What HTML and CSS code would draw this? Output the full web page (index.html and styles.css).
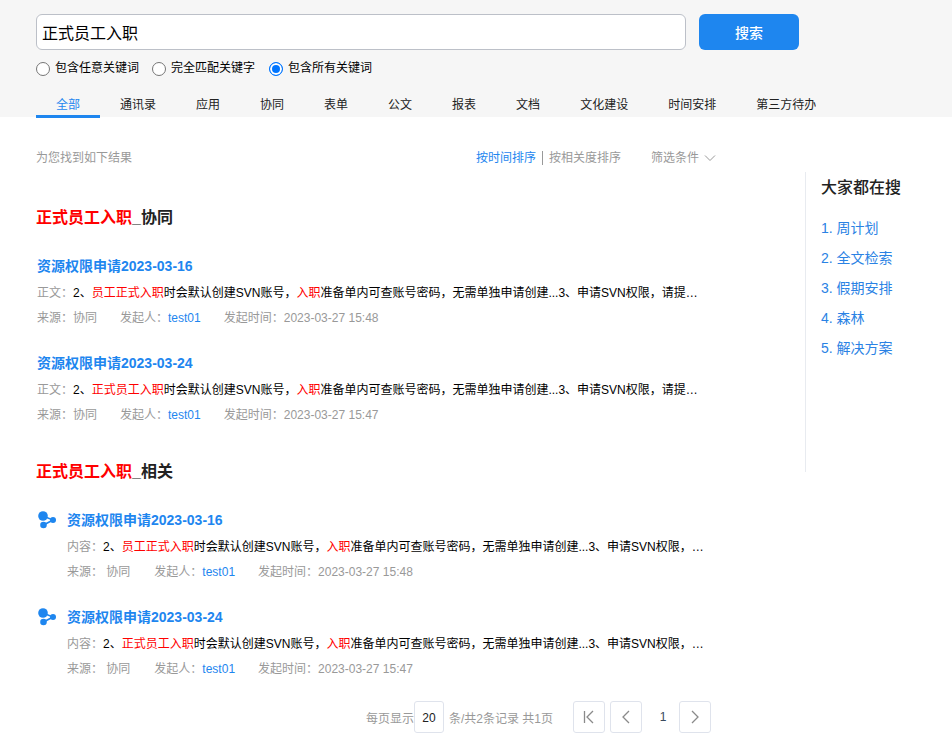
FILE: index.html
```html
<!DOCTYPE html>
<html lang="en">
<head>
    <meta charset="UTF-8">
    <meta name="viewport" content="width=device-width, initial-scale=1.0">
    <title>搜索结果</title>
    <link rel="stylesheet" href="styles.css">
</head>
<body>
    <div class="search-head">
        <div class="search-row">
            <input class="search-input" type="text" value="正式员工入职">
            <button class="search-btn">搜索</button>
        </div>
        <div class="radio-row">
            <label class="radio-item"><span class="radio"></span>包含任意关键词</label>
            <label class="radio-item"><span class="radio"></span>完全匹配关键字</label>
            <label class="radio-item"><span class="radio checked"></span>包含所有关键词</label>
        </div>
        <div class="tabs">
            <div class="tab active">全部</div>
            <div class="tab">通讯录</div>
            <div class="tab">应用</div>
            <div class="tab">协同</div>
            <div class="tab">表单</div>
            <div class="tab">公文</div>
            <div class="tab">报表</div>
            <div class="tab">文档</div>
            <div class="tab">文化建设</div>
            <div class="tab">时间安排</div>
            <div class="tab">第三方待办</div>
        </div>
    </div>

    <div class="content">
        <div class="results">
            <div class="toolbar">
                <span>为您找到如下结果</span>
                <div class="sort">
                    <span class="sort-on">按时间排序</span>
                    <span class="sort-line"></span>
                    <span>按相关度排序</span>
                    <span class="filter">筛选条件
                        <svg width="12" height="12" viewBox="0 0 12 12"><path d="M1 3.5 6 8.5 11 3.5" fill="none" stroke="#999" stroke-width="1"/></svg>
                    </span>
                </div>
            </div>

            <!-- 协同 -->
            <h2 class="group-title"><em>正式员工入职</em>_协同</h2>
            <div class="item">
                <div class="item-title">资源权限申请2023-03-16</div>
                <div class="item-text"><span class="label">正文：</span>2、<em>员工正式入职</em>时会默认创建SVN账号，<em>入职</em>准备单内可查账号密码，无需单独申请创建...3、申请SVN权限，请提交申请单</div>
                <div class="item-meta"><span>来源：协同</span><span>发起人：<a>test01</a></span><span>发起时间：2023-03-27 15:48</span></div>
            </div>
            <div class="item">
                <div class="item-title">资源权限申请2023-03-24</div>
                <div class="item-text"><span class="label">正文：</span>2、<em>正式员工入职</em>时会默认创建SVN账号，<em>入职</em>准备单内可查账号密码，无需单独申请创建...3、申请SVN权限，请提交申请单</div>
                <div class="item-meta"><span>来源：协同</span><span>发起人：<a>test01</a></span><span>发起时间：2023-03-27 15:47</span></div>
            </div>

            <!-- 相关 -->
            <h2 class="group-title second"><em>正式员工入职</em>_相关</h2>
            <div class="item with-icon">
                <svg class="item-icon" width="20" height="20" viewBox="0 0 20 20"><path d="M6 7 16 11 6.500 16" fill="none" stroke="#1e86ef" stroke-width="1.600"/><circle cx="6" cy="7" r="4.800" fill="#1e86ef"/><circle cx="16" cy="11" r="3" fill="#1e86ef"/><circle cx="6.500" cy="16" r="3.300" fill="#1e86ef"/></svg>
                <div class="item-title">资源权限申请2023-03-16</div>
                <div class="item-text"><span class="label">内容：</span>2、<em>员工正式入职</em>时会默认创建SVN账号，<em>入职</em>准备单内可查账号密码，无需单独申请创建...3、申请SVN权限，请提交申请单</div>
                <div class="item-meta"><span>来源：&nbsp;协同</span><span>发起人：<a>test01</a></span><span>发起时间：2023-03-27 15:48</span></div>
            </div>
            <div class="item with-icon">
                <svg class="item-icon" width="20" height="20" viewBox="0 0 20 20"><path d="M6 7 16 11 6.500 16" fill="none" stroke="#1e86ef" stroke-width="1.600"/><circle cx="6" cy="7" r="4.800" fill="#1e86ef"/><circle cx="16" cy="11" r="3" fill="#1e86ef"/><circle cx="6.500" cy="16" r="3.300" fill="#1e86ef"/></svg>
                <div class="item-title">资源权限申请2023-03-24</div>
                <div class="item-text"><span class="label">内容：</span>2、<em>正式员工入职</em>时会默认创建SVN账号，<em>入职</em>准备单内可查账号密码，无需单独申请创建...3、申请SVN权限，请提交申请单</div>
                <div class="item-meta"><span>来源：&nbsp;协同</span><span>发起人：<a>test01</a></span><span>发起时间：2023-03-27 15:47</span></div>
            </div>

            <div class="pager">
                <span>每页显示</span>
                <span class="page-size">20</span>
                <span class="page-info">条/共2条记录 共1页</span>
                <span class="page-btn first"><svg width="12" height="14" viewBox="0 0 12 14"><path d="M1.500 1V13M10 1 4 7 10 13" fill="none" stroke="#8a8a8a" stroke-width="1.300"/></svg></span>
                <span class="page-btn"><svg width="10" height="14" viewBox="0 0 10 14"><path d="M8 1 2 7 8 13" fill="none" stroke="#8a8a8a" stroke-width="1.300"/></svg></span>
                <span class="page-num">1</span>
                <span class="page-btn"><svg width="10" height="14" viewBox="0 0 10 14"><path d="M2 1 8 7 2 13" fill="none" stroke="#8a8a8a" stroke-width="1.300"/></svg></span>
            </div>
        </div>

        <div class="side">
            <div class="side-title">大家都在搜</div>
            <div class="side-link">1. 周计划</div>
            <div class="side-link">2. 全文检索</div>
            <div class="side-link">3. 假期安排</div>
            <div class="side-link">4. 森林</div>
            <div class="side-link">5. 解决方案</div>
        </div>
    </div>
</body>
</html>
```

FILE: styles.css
```css
* {
    box-sizing: border-box;
}
body {
    margin: 0;
    background-color: #fff;
    color: #000;
    font-family: "Liberation Sans", "Noto Sans CJK SC", sans-serif;
    font-size: 12px;
    overflow: hidden;
}
em {
    color: #f00;
    font-style: normal;
}
.search-head {
    height: 117px;
    padding: 14px 0 0 36px;
    background-color: #f6f6f6;
}
.search-row {
    display: flex;
    gap: 13px;
}
.search-input {
    width: 650px;
    height: 36px;
    padding: 0 5px;
    border: 1px solid #bcc0c8;
    border-radius: 6px;
    background-color: #fff;
    color: #000;
    font-family: inherit;
    font-size: 16px;
    outline: none;
}
.search-btn {
    width: 100px;
    height: 36px;
    border: 0;
    border-radius: 6px;
    background-color: #1e86ef;
    color: #fff;
    font-family: inherit;
    font-size: 14px;
    font-weight: 500;
}
.radio-row {
    display: flex;
    gap: 13px;
    height: 17px;
    margin-top: 10px;
}
.radio-item {
    display: flex;
    align-items: center;
    gap: 5px;
    line-height: 17px;
}
.radio-item:last-child {
    margin-left: 1px;
}
.radio {
    width: 14px;
    height: 14px;
    border: 1px solid #767676;
    border-radius: 50%;
    background-color: #fff;
}
.radio.checked {
    border: 1px solid #0075ff;
    background-color: #0075ff;
    box-shadow: inset 0 0 0 2px #fff;
}
.tabs {
    display: flex;
    width: 780px;
    height: 24px;
    margin-top: 17px;
    overflow: hidden;
}
.tab {
    flex: none;
    height: 24px;
    padding: 0 20px;
    line-height: 22px;
    color: #222;
}
.tab.active {
    color: #1e86ef;
    border-bottom: 3px solid #1e86ef;
}
.content {
    display: flex;
    padding-left: 36px;
}
.results {
    width: 680px;
    padding-top: 32px;
}
.toolbar {
    display: flex;
    justify-content: space-between;
    height: 18px;
    line-height: 18px;
    color: #999;
}
.sort {
    display: flex;
    align-items: center;
}
.sort-on {
    color: #1e86ef;
}
.sort-line {
    width: 1px;
    height: 14px;
    margin: 0 6px;
    background-color: #999;
}
.filter {
    display: flex;
    align-items: center;
    gap: 5px;
    margin-left: 30px;
}
.group-title {
    height: 46px;
    margin: 27px 0 0;
    line-height: 48px;
    font-size: 16px;
    font-weight: bold;
    color: #222;
}
.group-title.second {
    margin-top: 14px;
}
.item {
    position: relative;
    height: 97px;
    padding: 16px 0 0 1px;
}
.item-title {
    height: 20px;
    line-height: 20px;
    font-size: 14px;
    font-weight: bold;
    color: #1e86ef;
}
.item-text {
    width: 661px;
    height: 24px;
    margin-top: 5px;
    line-height: 24px;
    white-space: nowrap;
    overflow: hidden;
    text-overflow: ellipsis;
}
.label {
    color: #999;
}
.item-meta {
    display: flex;
    gap: 23px;
    height: 24px;
    line-height: 26px;
    color: #999;
}
.item-meta a {
    color: #1e86ef;
}
.with-icon {
    padding-left: 31px;
}
.with-icon .item-text {
    width: 640px;
}
.with-icon .item-meta span:first-child {
    margin-right: 1px;
}
.item-icon {
    position: absolute;
    left: 1px;
    top: 15px;
}
.pager {
    display: flex;
    justify-content: flex-end;
    align-items: center;
    height: 32px;
    margin-top: 13px;
    padding-right: 5px;
    color: #999;
}
.page-size {
    width: 30px;
    height: 32px;
    line-height: 32px;
    border: 1px solid #dfe3ec;
    border-radius: 3px;
    text-align: center;
    color: #222;
}
.page-info {
    margin: 0 20px 0 5px;
}
.page-btn {
    display: flex;
    align-items: center;
    justify-content: center;
    width: 32px;
    height: 32px;
    border: 1px solid #dfe3ec;
    border-radius: 3px;
}
.page-btn.first {
    margin-right: 5px;
}
.page-num {
    width: 37px;
    padding-left: 5px;
    text-align: center;
    color: #3a4a5c;
}
.side {
    width: 147px;
    height: 300px;
    margin: 55px 0 0 89px;
    padding: 5px 0 0 15px;
    border-left: 1px solid #e8ebf0;
}
.side-title {
    height: 24px;
    margin-bottom: 12px;
    line-height: 22px;
    font-size: 16px;
    font-weight: 500;
    color: #222;
}
.side-link {
    height: 30px;
    line-height: 30px;
    font-size: 14px;
    color: #2a82e4;
}
```
